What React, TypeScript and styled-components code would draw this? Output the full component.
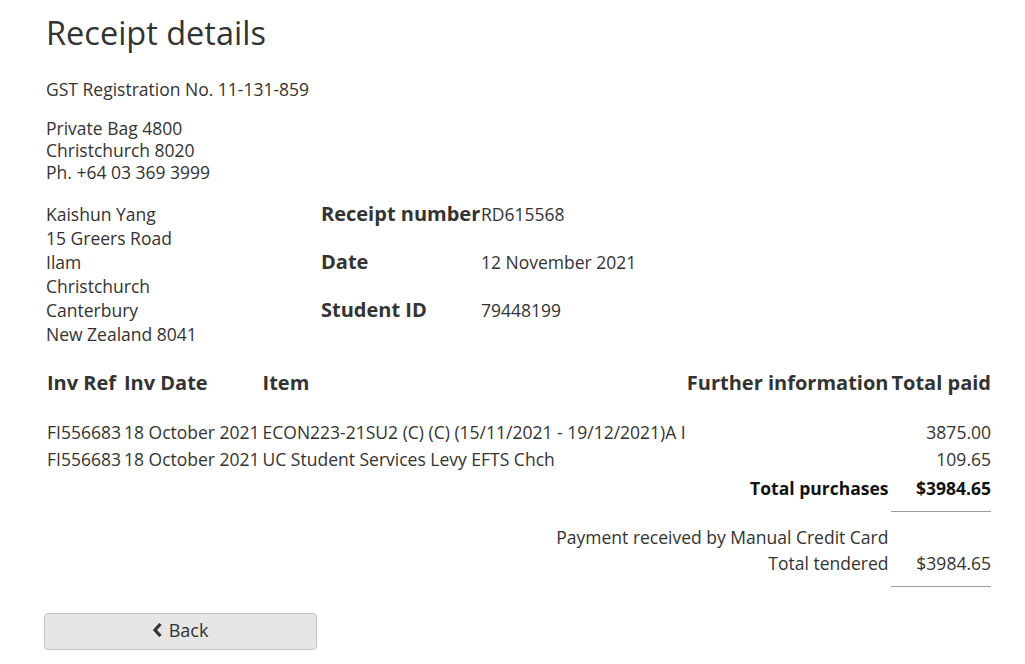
import React from 'react';
import styled, { createGlobalStyle } from 'styled-components';

const GlobalStyle = createGlobalStyle`
	body {
		margin: 0;
		background: #fff;
		color: #333;
		font-family: 'Open Sans', 'Liberation Sans', sans-serif;
		font-size: 17.5px;
	}
`;

const Page = styled.main`
	width: 945px;
	padding: 15px 0 20px 46px;
`;

const Title = styled.h1`
	margin: 0;
	font-size: 32.5px;
	font-weight: 400;
	line-height: 35px;
	color: #333;
`;

const Para = styled.p<{ $top: number }>`
	margin: ${({ $top }) => $top}px 0 0;
	line-height: 22px;
`;

const Details = styled.section`
	display: grid;
	grid-template-columns: 275px 1fr;
	margin-top: 19px;
`;

const Address = styled.div`
	line-height: 24px;
`;

const InfoGrid = styled.dl`
	display: grid;
	grid-template-columns: 160px 1fr;
	grid-auto-rows: 48px;
	align-items: baseline;
	margin: 0;
`;

const InfoLabel = styled.dt`
	font-size: 20px;
	font-weight: 700;
	line-height: 24px;
	white-space: nowrap;
`;

const InfoValue = styled.dd`
	margin: 0;
	line-height: 24px;
`;

const Table = styled.div`
	display: grid;
	grid-template-columns: auto auto minmax(0, 1fr) auto auto;
	column-gap: 3px;
	margin-top: 24px;
	padding-left: 1px;
`;

const Head = styled.div<{ $right?: boolean }>`
	font-size: 20px;
	font-weight: 700;
	line-height: 26px;
	margin-bottom: 23px;
	white-space: nowrap;
	text-align: ${({ $right }) => ($right ? 'right' : 'left')};
`;

const Cell = styled.div<{ $right?: boolean }>`
	line-height: 27px;
	white-space: nowrap;
	text-align: ${({ $right }) => ($right ? 'right' : 'left')};
`;

const SumLabel = styled.div<{ $bold?: boolean }>`
	grid-column: 1 / 5;
	text-align: right;
	line-height: ${({ $bold }) => ($bold ? 31 : 26)}px;
	font-weight: ${({ $bold }) => ($bold ? 700 : 400)};
	color: ${({ $bold }) => ($bold ? '#111' : '#333')};
`;

const SumValue = styled.div<{ $bold?: boolean }>`
	text-align: right;
	line-height: ${({ $bold }) => ($bold ? 31 : 26)}px;
	font-weight: ${({ $bold }) => ($bold ? 700 : 400)};
	color: ${({ $bold }) => ($bold ? '#111' : '#333')};
`;

const Rule = styled.hr<{ $top: number }>`
	grid-column: 5;
	margin: ${({ $top }) => $top}px 0 12px;
	border: 0;
	border-top: 1px solid #9a9a9a;
`;

const BackButton = styled.button`
	display: flex;
	align-items: center;
	justify-content: center;
	gap: 6px;
	width: 273px;
	height: 37px;
	margin: 14px 0 0 -2px;
	padding: 0 0 3px;
	background: #e6e6e6;
	border: 1px solid #c4c4c4;
	border-radius: 4px;
	color: #333;
	font-family: inherit;
	font-size: 18px;
	cursor: pointer;
`;

const rows = [
	{ ref: 'FI556683', date: '18 October 2021', item: 'ECON223-21SU2 (C) (C) (15/11/2021 - 19/12/2021)A I', paid: '3875.00' },
	{ ref: 'FI556683', date: '18 October 2021', item: 'UC Student Services Levy EFTS Chch', paid: '109.65' },
];

export default function App() {
	return (
		<Page>
			<GlobalStyle />
			<Title>Receipt details</Title>
			<Para $top={28}>GST Registration No. 11-131-859</Para>
			<Para $top={17}>
				Private Bag 4800
				<br />
				Christchurch 8020
				<br />
				Ph. +64 03 369 3999
			</Para>

			<Details>
				<Address>
					Kaishun Yang
					<br />
					15 Greers Road
					<br />
					Ilam
					<br />
					Christchurch
					<br />
					Canterbury
					<br />
					New Zealand 8041
				</Address>
				<InfoGrid>
					<InfoLabel>Receipt number</InfoLabel>
					<InfoValue>RD615568</InfoValue>
					<InfoLabel>Date</InfoLabel>
					<InfoValue>12 November 2021</InfoValue>
					<InfoLabel>Student ID</InfoLabel>
					<InfoValue>79448199</InfoValue>
				</InfoGrid>
			</Details>

			<Table>
				<Head>Inv Ref</Head>
				<Head>Inv Date</Head>
				<Head>Item</Head>
				<Head $right>Further information</Head>
				<Head $right>Total paid</Head>
				{rows.map((r, i) => (
					<React.Fragment key={i}>
						<Cell>{r.ref}</Cell>
						<Cell>{r.date}</Cell>
						<Cell>{r.item}</Cell>
						<Cell />
						<Cell $right>{r.paid}</Cell>
					</React.Fragment>
				))}
				<SumLabel $bold>Total purchases</SumLabel>
				<SumValue $bold>$3984.65</SumValue>
				<Rule $top={7} />
				<SumLabel>Payment received by Manual Credit Card</SumLabel>
				<SumValue />
				<SumLabel>Total tendered</SumLabel>
				<SumValue>$3984.65</SumValue>
				<Rule $top={10} />
			</Table>

			<BackButton type="button">
				<svg width="10" height="14" viewBox="0 0 10 14" aria-hidden="true">
					<path d="M7.5 1 L2 7 L7.5 13" fill="none" stroke="#333" strokeWidth="3.2" strokeLinejoin="miter" />
				</svg>
				Back
			</BackButton>
		</Page>
	);
}
